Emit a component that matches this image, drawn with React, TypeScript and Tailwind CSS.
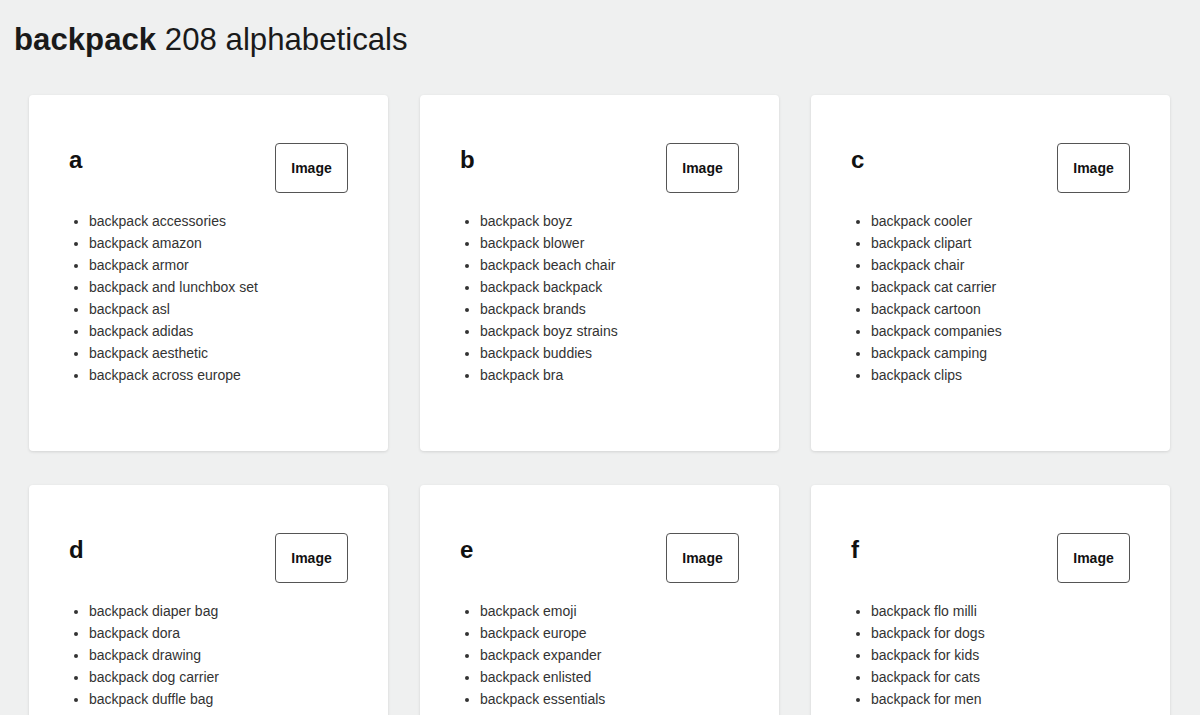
const GROUPS: { letter: string; items: string[] }[] = [
  {
    letter: "a",
    items: ["accessories", "amazon", "armor", "and lunchbox set", "asl", "adidas", "aesthetic", "across europe"],
  },
  {
    letter: "b",
    items: ["boyz", "blower", "beach chair", "backpack", "brands", "boyz strains", "buddies", "bra"],
  },
  {
    letter: "c",
    items: ["cooler", "clipart", "chair", "cat carrier", "cartoon", "companies", "camping", "clips"],
  },
  {
    letter: "d",
    items: ["diaper bag", "dora", "drawing", "dog carrier", "duffle bag"],
  },
  {
    letter: "e",
    items: ["emoji", "europe", "expander", "enlisted", "essentials"],
  },
  {
    letter: "f",
    items: ["flo milli", "for dogs", "for kids", "for cats", "for men"],
  },
];

function LetterCard({ letter, items }: { letter: string; items: string[] }) {
  return (
    <div className="bg-white rounded-[4px] shadow-[0_1px_3px_rgba(0,0,0,0.12)] h-[356px] px-10 pt-[48px]">
      <div className="flex items-start justify-between">
        <h2 className="mt-[3px] text-[24px] leading-[28px] font-bold text-[#111]">{letter}</h2>
        <button className="w-[73px] h-[50px] border border-[#555] rounded-[4px] bg-white text-[14px] font-bold text-[#111]">
          Image
        </button>
      </div>
      <ul className="mt-[17px] pl-5 list-disc text-[14px] leading-[22px] text-[#333]">
        {items.map((it) => (
          <li key={it}>backpack {it}</li>
        ))}
      </ul>
    </div>
  );
}

export default function App() {
  return (
    <div
      className="min-h-screen bg-[#eff0f0]"
      style={{ fontFamily: '"Liberation Sans", Arial, sans-serif' }}
    >
      <h1 className="pt-[21px] pl-[14px] text-[31.2px] leading-[37px] text-[#1a1a1a]">
        <span className="font-bold">backpack</span> 208 alphabeticals
      </h1>
      <div className="mt-[37px] pl-[29px] pr-[30px] grid grid-cols-3 gap-x-[32px] gap-y-[34px] pb-10">
        {GROUPS.map((g) => (
          <LetterCard key={g.letter} letter={g.letter} items={g.items} />
        ))}
      </div>
    </div>
  );
}
